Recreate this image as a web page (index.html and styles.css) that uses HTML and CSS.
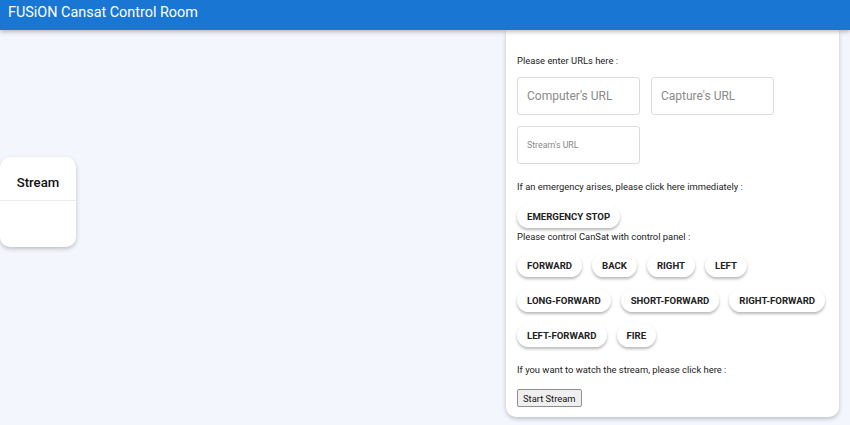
FILE: index.html
```html
<!DOCTYPE html>
<html lang="en">
<head>
<meta charset="utf-8">
<title>FUSiON Cansat Control Room</title>
<link rel="stylesheet" href="styles.css">
</head>
<body>
<header class="topbar">FUSiON Cansat Control Room</header>
<main class="layout">
  <section class="stream-card">
    <div class="stream-title">Stream</div>
    <div class="stream-body"></div>
  </section>
  <section class="panel">
    <p class="label first">Please enter URLs here :</p>
    <div class="url-grid">
      <input class="url-input" type="text" placeholder="Computer's URL">
      <input class="url-input" type="text" placeholder="Capture's URL">
      <input class="url-input small" type="text" placeholder="Stream's URL">
    </div>
    <p class="label gap-top">If an emergency arises, please click here immediately :</p>
    <div class="btn-row stop-row">
      <button class="pill">EMERGENCY STOP</button>
    </div>
    <p class="label tight">Please control CanSat with control panel :</p>
    <div class="btn-row controls">
      <button class="pill">FORWARD</button>
      <button class="pill">BACK</button>
      <button class="pill">RIGHT</button>
      <button class="pill">LEFT</button>
    </div>
    <div class="btn-row controls">
      <button class="pill">LONG-FORWARD</button>
      <button class="pill">SHORT-FORWARD</button>
      <button class="pill">RIGHT-FORWARD</button>
    </div>
    <div class="btn-row controls">
      <button class="pill">LEFT-FORWARD</button>
      <button class="pill">FIRE</button>
    </div>
    <p class="label gap-top">If you want to watch the stream, please click here :</p>
    <button class="plain">Start Stream</button>
  </section>
</main>
</body>
</html>
```
FILE: styles.css
```css
* { box-sizing: border-box; }
html, body { margin: 0; padding: 0; }
body {
  background: #f3f7fd;
  font-family: Roboto, "Liberation Sans", sans-serif;
  color: #222;
  height: 425px;
  overflow: hidden;
}
.topbar {
  position: relative;
  z-index: 2;
  height: 30px;
  background: #1976d2;
  color: #fff;
  font-size: 14.4px;
  line-height: 26px;
  padding-left: 8px;
  box-shadow: 0 2px 4px rgba(0,0,0,0.25);
}
.layout {
  display: flex;
  justify-content: space-between;
  align-items: flex-start;
}
.stream-card {
  margin-top: 127px;
  width: 76px;
  background: #fff;
  border-radius: 10px;
  box-shadow: 0 2px 4px rgba(0,0,0,0.22);
}
.stream-title {
  height: 44px;
  font-size: 13.2px;
  font-weight: 500;
  line-height: 52px;
  text-align: center;
  border-bottom: 1px solid #ebebeb;
  color: #111;
}
.stream-body { height: 46px; }
.panel {
  width: 333px;
  margin-right: 11px;
  background: #fff;
  border-radius: 0 0 10px 10px;
  box-shadow: 0 2px 4px rgba(0,0,0,0.22);
  padding: 25px 11px 10px 11px;
}
.label {
  margin: 0;
  font-size: 9.4px;
  line-height: 11px;
  color: #222;
}
.url-grid {
  margin-top: 11px;
  display: grid;
  grid-template-columns: 123px 123px;
  gap: 11px;
}
.url-input {
  height: 38px;
  border: 1px solid #dcdcdc;
  border-radius: 3px;
  padding: 0 9px;
  font-family: Roboto, "Liberation Sans", sans-serif;
  font-size: 12px;
  color: #222;
  outline: none;
}
.url-input.small { font-size: 8.8px; }
.url-input::placeholder { color: #8a8a8a; }
.gap-top { margin-top: 17px; }
.btn-row {
  display: flex;
  flex-wrap: wrap;
  gap: 10px;
}
.stop-row { margin-top: 13px; }
.tight { margin-top: 3px; }
.controls { margin-top: 12px; }
.pill {
  height: 23px;
  padding: 0 10px;
  border: none;
  border-radius: 12px;
  background: #fff;
  font-family: Roboto, "Liberation Sans", sans-serif;
  font-size: 9.6px;
  font-weight: 700;
  color: #222;
  box-shadow: 0 2px 3px rgba(0,0,0,0.28);
}
.plain {
  display: block;
  margin-top: 14px;
  height: 18px;
  padding: 0 5px;
  background: #efefef;
  border: 1px solid #8f8f8f;
  border-radius: 2px;
  font-family: Roboto, "Liberation Sans", sans-serif;
  font-size: 9.4px;
  color: #111;
}
```
